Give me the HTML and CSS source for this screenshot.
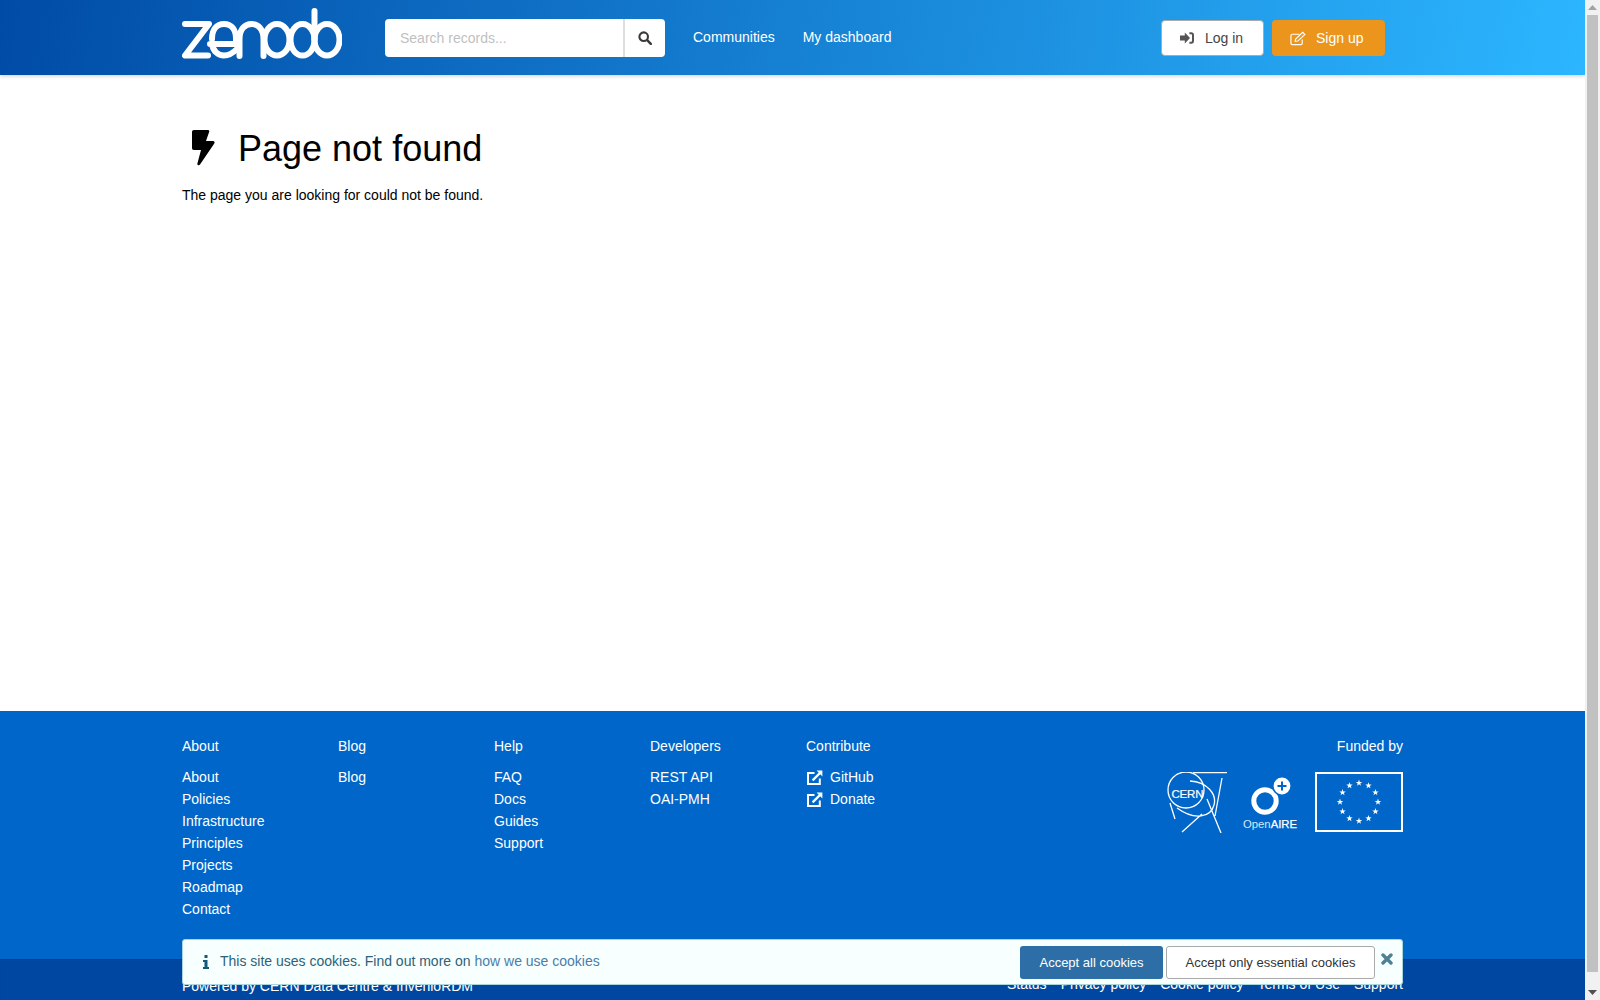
FILE: index.html
```html
<!DOCTYPE html>
<html lang="en">
<head>
<meta charset="utf-8">
<title>Page not found</title>
<link rel="stylesheet" href="styles.css">
</head>
<body>
<div class="page">
<header class="topbar">
  <div class="container topbar-inner">
    <a class="logo" href="#" aria-label="zenodo">
      <svg viewBox="0 0 160 52" width="160" height="52" fill="none" stroke="#fff" stroke-width="6" stroke-linecap="round" stroke-linejoin="round">
        <path d="M3 16H27L3 47.5H26"/>
        <path d="M30 31C30 21 35 16 42 16C49 16 54 21 54 31V36H28M30 36C31 43 36 47.5 42 47.5C47 47.5 51 45 55 41"/>
        <path d="M57.5 48V31C57.5 21 63 16 69.5 16C76 16 81.5 21 81.5 31V48"/>
        <ellipse cx="95" cy="31.8" rx="12.5" ry="15.8"/>
        <ellipse cx="120.5" cy="31.8" rx="12" ry="15.8"/>
        <path d="M132.5 3V31"/>
        <ellipse cx="145" cy="31.8" rx="12.5" ry="15.8"/>
      </svg>
    </a>
    <form class="search">
      <input class="search-input" type="text" placeholder="Search records...">
      <button class="search-btn" type="button" aria-label="Search">
        <svg viewBox="0 0 16 16" width="14" height="14"><circle cx="6.5" cy="6.5" r="4.9" fill="none" stroke="#3a3a3a" stroke-width="2.4"/><path d="M10.5 10.5L14.6 14.6" stroke="#3a3a3a" stroke-width="2.8" stroke-linecap="round"/></svg>
      </button>
    </form>
    <nav class="mainnav">
      <a href="#">Communities</a>
      <a href="#">My dashboard</a>
    </nav>
    <div class="auth">
      <a class="btn btn-login" href="#">
        <svg viewBox="0 0 14 12" width="14" height="12"><path d="M0 3.6H4.8V.6L10 6L4.8 11.4V8.4H0Z" fill="#555"/><path d="M9.4 1.2H11.2C12.3 1.2 13 1.9 13 3V9C13 10.1 12.3 10.8 11.2 10.8H9.4" fill="none" stroke="#555" stroke-width="2"/></svg>
        <span>Log in</span>
      </a>
      <a class="btn btn-signup" href="#">
        <svg viewBox="0 0 17 15" width="16" height="15" fill="none" stroke="#fff" stroke-width="1.2"><path d="M13 8.5V12.5C13 13.4 12.4 14 11.5 14H2.5C1.6 14 1 13.4 1 12.5V4.5C1 3.6 1.6 3 2.5 3H10"/><path d="M5.5 10.5L6 8L13.5 1L15.8 3.2L8.3 10.2Z"/></svg>
        <span>Sign up</span>
      </a>
    </div>
  </div>
</header>

<main class="content container">
  <h1 class="page-title">
    <svg class="bolt" viewBox="0 0 24 37" width="24" height="37"><path d="M3 1H17C18 1 18.6 1.8 18.2 2.8L15 12H22C23.4 12 24 13.2 23.3 14.4L9 35.6C8 37 6 36.4 6.4 34.6L10 21H3C1.6 21 1 20 1 19V3C1 1.8 1.8 1 3 1Z" fill="#000"/></svg>
    Page not found
  </h1>
  <p class="page-text">The page you are looking for could not be found.</p>
</main>

<footer class="footer">
  <div class="container footer-top">
    <div class="fcol">
      <h2>About</h2>
      <a href="#">About</a><a href="#">Policies</a><a href="#">Infrastructure</a><a href="#">Principles</a><a href="#">Projects</a><a href="#">Roadmap</a><a href="#">Contact</a>
    </div>
    <div class="fcol">
      <h2>Blog</h2>
      <a href="#">Blog</a>
    </div>
    <div class="fcol">
      <h2>Help</h2>
      <a href="#">FAQ</a><a href="#">Docs</a><a href="#">Guides</a><a href="#">Support</a>
    </div>
    <div class="fcol">
      <h2>Developers</h2>
      <a href="#">REST API</a><a href="#">OAI-PMH</a>
    </div>
    <div class="fcol">
      <h2>Contribute</h2>
      <a class="ext" href="#"><svg viewBox="0 0 16 15" width="16" height="15" fill="none" stroke="#fff"><path d="M12.8 8.5V14H1V3H7.5" stroke-width="2"/><path d="M5.6 10.4L13.6 2.4" stroke-width="2.2"/><path d="M9.6 .6H15.4V6.4Z" fill="#fff" stroke="none"/></svg>GitHub</a>
      <a class="ext" href="#"><svg viewBox="0 0 16 15" width="16" height="15" fill="none" stroke="#fff"><path d="M12.8 8.5V14H1V3H7.5" stroke-width="2"/><path d="M5.6 10.4L13.6 2.4" stroke-width="2.2"/><path d="M9.6 .6H15.4V6.4Z" fill="#fff" stroke="none"/></svg>Donate</a>
    </div>
    <div class="funded">
      <h2>Funded by</h2>
      <div class="funders">
        <svg class="cern" viewBox="0 0 60 61" width="60" height="61" fill="none" stroke="#fff" stroke-width="1.3">
          <circle cx="19" cy="18" r="18"/>
          <path d="M26 .7H61M55 6L48 44M23 9C40 10 50 22 47 33C44 45 28 49 10 36M3 31L8 47M40 27L54 61M35 42L15 60"/>
          <text x="4.5" y="26" class="cern-text">CERN</text>
        </svg>
        <svg class="openaire" viewBox="0 0 56 60" width="56" height="60">
          <circle cx="22" cy="29" r="11.2" fill="none" stroke="#fff" stroke-width="5"/>
          <circle cx="39" cy="14" r="9.2" fill="#fff" stroke="#0066c9" stroke-width="1.6"/>
          <path d="M39 9.5V18.5M34.5 14H43.5" stroke="#0066c9" stroke-width="2"/>
          <text x="0" y="56" class="oa-text"><tspan class="oa-light">Open</tspan><tspan class="oa-strong">AIRE</tspan></text>
        </svg>
        <svg class="eu" viewBox="0 0 88 60" width="88" height="60">
          <defs><polygon id="star" points="0,-3.4 .8,-1.1 3.2,-1.05 1.3,.42 2,2.75 0,1.36 -2,2.75 -1.3,.42 -3.2,-1.05 -.8,-1.1" fill="#fff"/></defs>
          <rect x="1" y="1" width="86" height="58" fill="none" stroke="#fff" stroke-width="2"/>
          <use href="#star" x="44" y="11"/><use href="#star" x="53.5" y="13.55"/><use href="#star" x="60.45" y="20.5"/><use href="#star" x="63" y="30"/><use href="#star" x="60.45" y="39.5"/><use href="#star" x="53.5" y="46.45"/><use href="#star" x="44" y="49"/><use href="#star" x="34.5" y="46.45"/><use href="#star" x="27.55" y="39.5"/><use href="#star" x="25" y="30"/><use href="#star" x="27.55" y="20.5"/><use href="#star" x="34.5" y="13.55"/>
        </svg>
      </div>
    </div>
  </div>
  <div class="footer-bottom">
    <div class="container footer-bottom-inner">
      <span>Powered by <a href="#">CERN Data Centre</a> &amp; <a href="#">InvenioRDM</a></span>
      <nav class="legal"><a href="#">Status</a><a href="#">Privacy policy</a><a href="#">Cookie policy</a><a href="#">Terms of Use</a><a href="#">Support</a></nav>
    </div>
  </div>
</footer>

<div class="cookie">
  <svg class="cookie-i" viewBox="0 0 6 14" width="6" height="14"><path d="M1.5 0H4.5V3H1.5ZM0 5H4.5V12H6V14H0V12H1.5V7H0Z" fill="#135a7a"/></svg>
  <p class="cookie-text">This site uses cookies. Find out more on <a href="#">how we use cookies</a></p>
  <button class="cbtn cbtn-primary" type="button">Accept all cookies</button>
  <button class="cbtn cbtn-plain" type="button">Accept only essential cookies</button>
  <button class="cclose" type="button" aria-label="Close">
    <svg viewBox="0 0 12 12" width="12" height="12"><path d="M2 2L10 10M10 2L2 10" stroke="#4d8296" stroke-width="3.4" stroke-linecap="round"/></svg>
  </button>
</div>
</div>
<aside class="scrollbar" aria-hidden="true">
  <svg class="sb-arrow" viewBox="0 0 15 15" width="15" height="15"><path d="M3 10H12L7.5 5Z" fill="#a3a3a3"/></svg>
  <div class="sb-track"><div class="sb-thumb"></div></div>
  <svg class="sb-arrow" viewBox="0 0 15 15" width="15" height="15"><path d="M3 5H12L7.5 10Z" fill="#505050"/></svg>
</aside>
</body>
</html>
```
FILE: styles.css
```css
* { box-sizing: border-box; }
html, body { margin: 0; padding: 0; height: 100%; overflow: hidden; }
body {
  display: flex;
  font-family: "Liberation Sans", Arial, sans-serif;
  font-size: 14px;
  line-height: 20px;
  color: #000;
  background: #fff;
}
a { color: inherit; text-decoration: none; }
.page { flex: 1; min-width: 0; height: 100%; overflow: hidden; position: relative; }
.container { width: 1221px; margin: 0 auto; }

.scrollbar { flex: none; width: 15px; height: 100%; background: #f1f1f1; display: flex; flex-direction: column; }
.sb-arrow { display: block; flex: none; }
.sb-track { flex: 1; padding: 0 2px 13px; }
.sb-thumb { height: 100%; background: #c1c1c1; }

.topbar {
  height: 75px;
  background: linear-gradient(100deg, #004ba6 0%, #2cb6ff 100%);
  box-shadow: 0 1px 4px rgba(0, 0, 0, .2);
  position: relative;
}
.topbar-inner { display: flex; align-items: flex-start; height: 75px; }
.logo { display: block; margin-top: 8px; width: 160px; height: 52px; }
.logo svg { display: block; }
.search { display: flex; margin: 19px 0 0 43px; width: 280px; height: 38px; }
.search-input {
  width: 240px;
  height: 38px;
  border: 0;
  border-right: 2px solid #dedede;
  border-radius: 4px 0 0 4px;
  padding: 0 15px;
  font: 14px "Liberation Sans", Arial, sans-serif;
  outline: none;
}
.search-input::placeholder { color: #bfbfbf; opacity: 1; }
.search-btn {
  width: 40px;
  height: 38px;
  border: 0;
  padding: 0;
  background: #fff;
  border-radius: 0 4px 4px 0;
  display: flex;
  align-items: center;
  justify-content: center;
}
.mainnav { display: flex; gap: 28px; margin: 27px 0 0 28px; color: #fff; }
.auth { display: flex; gap: 8px; margin: 20px 18px 0 auto; }
.btn {
  display: flex;
  align-items: center;
  height: 36px;
  border-radius: 4px;
  padding-left: 18px;
}
.btn-login { width: 103px; background: #fff; color: #444; border: 1px solid #aaa; gap: 11px; }
.btn-signup { width: 113px; background: #ec951c; color: #fff; gap: 10px; }

.content { height: 636px; padding-top: 52px; }
.page-title {
  display: flex;
  align-items: center;
  gap: 23px;
  margin: 0;
  padding-left: 9px;
  height: 44px;
  font-size: 36px;
  line-height: 44px;
  font-weight: 400;
}
.bolt { display: block; flex: none; margin-bottom: 4px; }
.page-text { margin: 14px 0 0; }

.footer { background: #0066c9; color: #fff; }
.footer-top { display: flex; height: 248px; padding-top: 25px; }
.fcol { width: 156px; display: flex; flex-direction: column; }
.fcol h2, .funded h2 { margin: 0 0 10px; font-size: 14px; line-height: 20px; font-weight: 400; }
.fcol a { display: block; line-height: 22px; }
.ext { display: flex !important; align-items: center; gap: 7px; }
.ext svg { flex: none; margin-left: 1px; }
.funded { margin-left: auto; text-align: right; }
.funded h2 { margin-bottom: 16px; }
.funders { display: flex; align-items: flex-start; gap: 16px; }
.cern-text { font: 11.5px "Liberation Sans", Arial, sans-serif; fill: #fff; stroke: #fff; stroke-width: .2px; letter-spacing: -.2px; }
.oa-text { font: 11.3px "Liberation Sans", Arial, sans-serif; fill: #fff; }
.oa-light { fill: #d8e6f5; }
.oa-strong { stroke: #fff; stroke-width: .25px; }

.footer-bottom { height: 54px; background: #0047a2; box-shadow: inset 0 1px 1px rgba(0, 0, 0, .12); }
.footer-bottom-inner { display: flex; justify-content: space-between; padding-top: 17px; }
.legal { display: flex; gap: 14px; margin-top: -2px; }

.cookie {
  position: absolute;
  left: 182px;
  bottom: 15px;
  width: 1221px;
  height: 46px;
  background: #f8ffff;
  border: 1px solid #a9d5de;
  border-radius: 3px;
  display: flex;
  align-items: center;
  padding: 0 0 0 20px;
  color: #2c6278;
}
.cookie-i { flex: none; }
.cookie-text { margin: -2px 0 0 11px; flex: 1; }
.cookie-text a { color: #4a7da8; }
.cbtn {
  height: 33px;
  border-radius: 3px;
  font: 13px "Liberation Sans", Arial, sans-serif;
  padding: 0;
}
.cbtn-primary { width: 143px; background: #2e6ea6; color: #fff; border: 0; margin-right: 3px; }
.cbtn-plain { width: 209px; background: #fff; color: #333; border: 1px solid #aaa; }
.cclose { width: 27px; height: 33px; border: 0; background: none; padding: 7px 4px 0 0; display: flex; align-items: flex-start; justify-content: center; }
```
